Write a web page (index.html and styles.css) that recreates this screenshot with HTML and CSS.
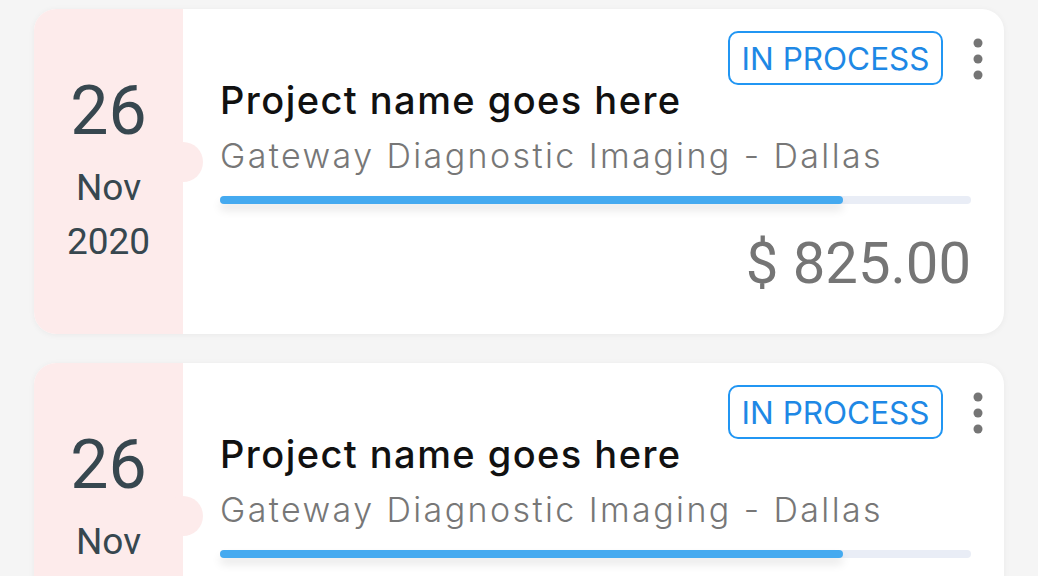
FILE: index.html
```html
<!DOCTYPE html>
<html lang="en">
<head>
<meta charset="utf-8">
<title>Projects</title>
<link rel="stylesheet" href="styles.css">
</head>
<body>
<div class="list">
  <div class="card">
    <div class="date">
      <div class="day">26</div>
      <div class="month">Nov</div>
      <div class="year">2020</div>
    </div>
    <div class="main">
      <div class="title">Project name goes here</div>
      <div class="client">Gateway Diagnostic Imaging - Dallas</div>
      <div class="progress"><div class="fill" style="width:83%"></div></div>
      <div class="amount">$ 825.00</div>
    </div>
    <div class="top-actions">
      <span class="badge">IN PROCESS</span>
      <svg class="kebab" width="10" height="42" viewBox="0 0 10 42"><circle cx="5" cy="5" r="4.5"/><circle cx="5" cy="21" r="4.5"/><circle cx="5" cy="37" r="4.5"/></svg>
    </div>
  </div>
  <div class="card">
    <div class="date">
      <div class="day">26</div>
      <div class="month">Nov</div>
      <div class="year">2020</div>
    </div>
    <div class="main">
      <div class="title">Project name goes here</div>
      <div class="client">Gateway Diagnostic Imaging - Dallas</div>
      <div class="progress"><div class="fill" style="width:83%"></div></div>
      <div class="amount">$ 825.00</div>
    </div>
    <div class="top-actions">
      <span class="badge">IN PROCESS</span>
      <svg class="kebab" width="10" height="42" viewBox="0 0 10 42"><circle cx="5" cy="5" r="4.5"/><circle cx="5" cy="21" r="4.5"/><circle cx="5" cy="37" r="4.5"/></svg>
    </div>
  </div>
</div>
</body>
</html>
```
FILE: styles.css
```css
html, body {
  margin: 0;
  padding: 0;
  overflow: hidden;
  background: #f5f5f5;
}
.list {
  display: flex;
  flex-direction: column;
  gap: 29px;
  padding: 9px 34px 0 34px;
}
.card {
  position: relative;
  display: flex;
  height: 325px;
  flex-shrink: 0;
  background: #ffffff;
  border-radius: 22px;
  box-shadow: 0 1px 6px rgba(0,0,0,0.05);
}
.date {
  position: relative;
  width: 149px;
  flex-shrink: 0;
  box-sizing: border-box;
  padding-bottom: 14px;
  background: #fdebeb;
  border-radius: 22px 0 0 22px;
  display: flex;
  flex-direction: column;
  align-items: center;
  justify-content: center;
  font-family: Roboto, "Liberation Sans", sans-serif;
  color: #37474f;
}
.date::after {
  content: "";
  position: absolute;
  right: -20px;
  top: 133px;
  width: 40px;
  height: 40px;
  border-radius: 50%;
  background: #fdebeb;
}
.day {
  font-size: 68px;
  line-height: 100px;
}
.month, .year {
  font-size: 37px;
  line-height: 54px;
}
.main {
  flex: 1;
  padding: 67px 33px 0 37px;
  display: flex;
  flex-direction: column;
  font-family: Inter, "Noto Sans", sans-serif;
}
.title {
  font-size: 38px;
  font-weight: 500;
  line-height: 48px;
  letter-spacing: 1.45px;
  color: #111111;
}
.client {
  font-size: 34px;
  font-weight: 300;
  line-height: 64px;
  letter-spacing: 2.4px;
  color: #777777;
}
.progress {
  margin-top: 8px;
  height: 8px;
  border-radius: 4px;
  background: #e9edf6;
}
.fill {
  height: 8px;
  border-radius: 4px;
  background: #45aaf0;
  box-shadow: 0 6px 10px rgba(0,0,0,0.10);
}
.amount {
  margin-top: 24px;
  text-align: right;
  font-family: Roboto, "Liberation Sans", sans-serif;
  font-size: 58px;
  line-height: 70px;
  color: #757575;
}
.top-actions {
  position: absolute;
  top: 22px;
  right: 21px;
  display: flex;
  align-items: flex-start;
  gap: 30px;
}
.badge {
  box-sizing: border-box;
  height: 54px;
  padding: 0 11.5px;
  display: flex;
  align-items: center;
  border: 2px solid #2196f3;
  border-radius: 10px;
  font-family: Inter, "Noto Sans", sans-serif;
  font-size: 31.5px;
  color: #1e88e5;
}
.kebab {
  margin-top: 7px;
  fill: #757575;
}
```
